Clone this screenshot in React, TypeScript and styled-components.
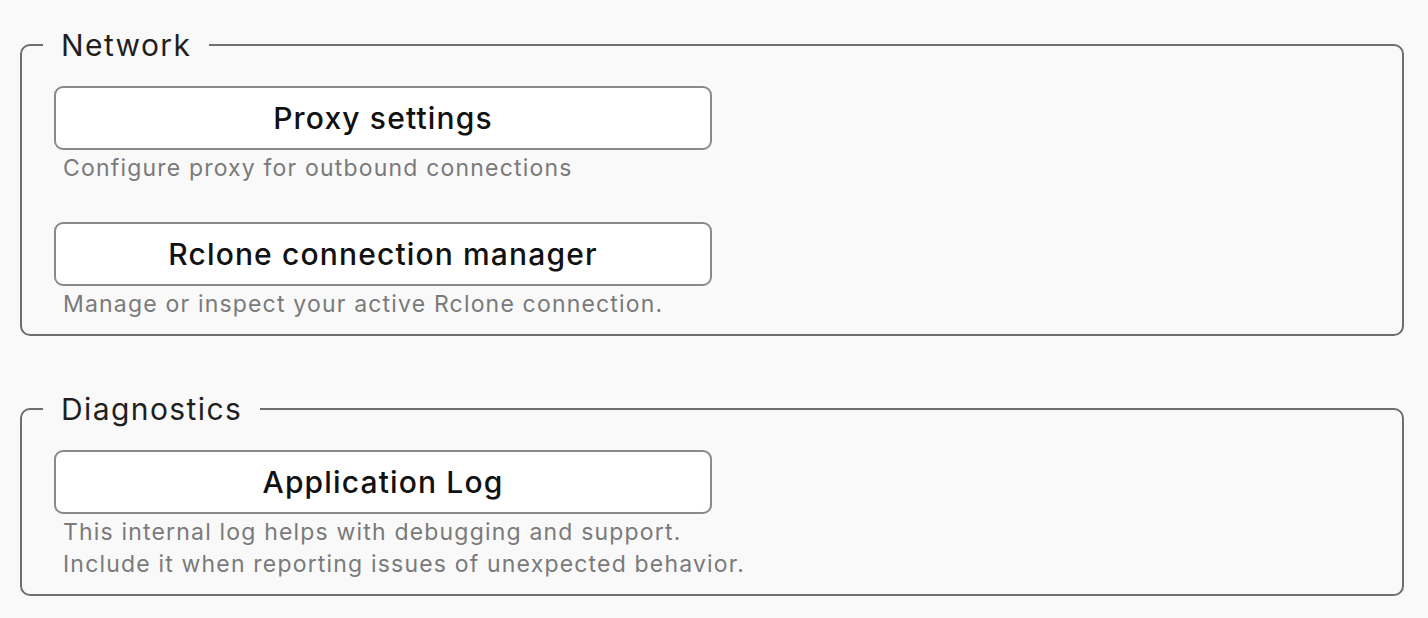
import React from "react";
import styled, { createGlobalStyle } from "styled-components";

const Global = createGlobalStyle`
  html, body { margin: 0; padding: 0; background: #f9f9f9; }
  body { font-family: Inter, "Noto Sans", "Liberation Sans", sans-serif; -webkit-font-smoothing: antialiased; }
`;

const Page = styled.div`
  width: 1428px;
  height: 618px;
  box-sizing: border-box;
  padding: 27px 24px 0 20px;
  display: flex;
  flex-direction: column;
  gap: 55px;
`;

const Group = styled.fieldset`
  margin: 0;
  padding: 0 20px 0 21px;
  border: 2px solid #6e6e6e;
  border-radius: 10px;
  min-width: 0;
`;

const Legend = styled.legend`
  padding: 0 18px;
  font-size: 30px;
  line-height: 36px;
  letter-spacing: 1.4px;
  color: #1f1f1f;
  font-weight: 400;
`;

const Body = styled.div`
  padding: 23px 0 14px 11px;
  display: flex;
  flex-direction: column;
  gap: 38px;
`;

const Item = styled.div`
  display: flex;
  flex-direction: column;
`;

const Button = styled.button`
  width: 658px;
  height: 64px;
  box-sizing: border-box;
  border: 2px solid #8a8a8a;
  border-radius: 9px;
  background: #ffffff;
  font-family: inherit;
  font-size: 30px;
  font-weight: 500;
  letter-spacing: 1.15px;
  color: #111;
  cursor: pointer;
  padding: 0;
`;

const Caption = styled.div`
  margin-top: 2px;
  padding-left: 9px;
  font-size: 23px;
  line-height: 32px;
  color: #7a7a7a;
  letter-spacing: 1.18px;
`;

export default function App() {
  return (
    <>
      <Global />
      <Page>
        <Group>
          <Legend>Network</Legend>
          <Body>
            <Item>
              <Button>Proxy settings</Button>
              <Caption>Configure proxy for outbound connections</Caption>
            </Item>
            <Item>
              <Button>Rclone connection manager</Button>
              <Caption>Manage or inspect your active Rclone connection.</Caption>
            </Item>
          </Body>
        </Group>
        <Group>
          <Legend>Diagnostics</Legend>
          <Body>
            <Item>
              <Button>Application Log</Button>
              <Caption>
                This internal log helps with debugging and support.
                <br />
                Include it when reporting issues of unexpected behavior.
              </Caption>
            </Item>
          </Body>
        </Group>
      </Page>
    </>
  );
}
